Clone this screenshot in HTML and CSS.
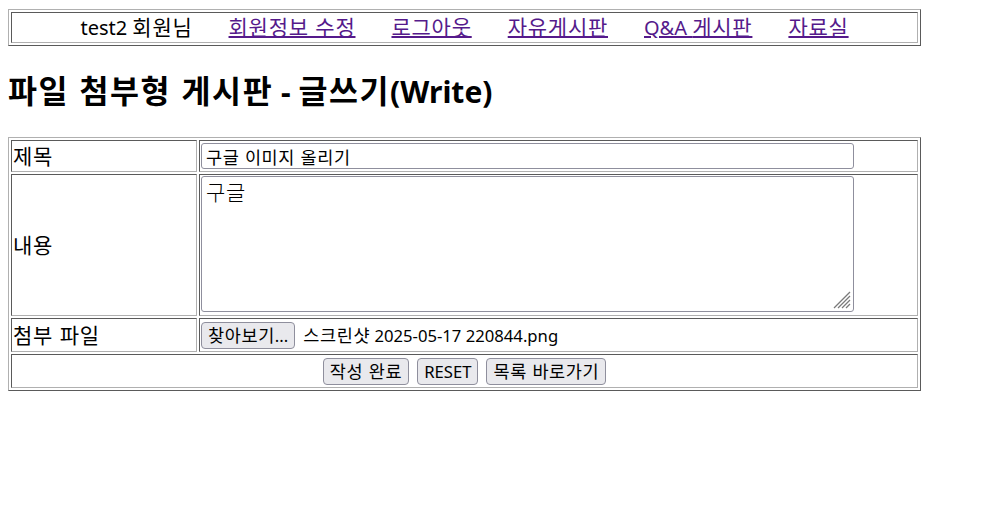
FILE: index.html
```html
<!DOCTYPE html>
<html lang="ko">
<head>
<meta charset="utf-8">
<title>파일 첨부형 게시판 - 글쓰기(Write)</title>
<link rel="stylesheet" href="styles.css">
</head>
<body>
<table class="frame">
  <tr>
    <td class="nav-cell">
      <div class="nav">
        <span>test2 <span class="ko">회원님</span></span>
        <a href="#" class="link"><span class="ko">회원정보 수정</span></a>
        <a href="#" class="link"><span class="ko">로그아웃</span></a>
        <a href="#" class="link"><span class="ko">자유게시판</span></a>
        <a href="#" class="link">Q&amp;A <span class="ko">게시판</span></a>
        <a href="#" class="link"><span class="ko">자료실</span></a>
      </div>
    </td>
  </tr>
</table>
<h2 class="title"><span class="ko">파일 첨부형 게시판</span> - <span class="ko">글쓰기</span>(Write)</h2>
<table class="frame">
  <tr>
    <td class="label"><span class="ko">제목</span></td>
    <td class="field"><input class="text-input" type="text" value="구글 이미지 올리기"></td>
  </tr>
  <tr>
    <td class="label"><span class="ko">내용</span></td>
    <td class="field">
      <div class="area">
        <textarea class="textarea">구글</textarea>
        <svg class="grip" width="18" height="18" viewBox="0 0 18 18">
          <g stroke="#7a7a7a" stroke-width="1.2" fill="none">
            <line x1="17" y1="1" x2="1" y2="17"/>
            <line x1="17" y1="5" x2="5" y2="17"/>
            <line x1="17" y1="9" x2="9" y2="17"/>
            <line x1="17" y1="13" x2="13" y2="17"/>
          </g>
        </svg>
      </div>
    </td>
  </tr>
  <tr>
    <td class="label"><span class="ko">첨부 파일</span></td>
    <td class="field">
      <div class="file">
        <button class="btn" type="button"><span class="ko">찾아보기</span>...</button>
        <span class="file-name"><span class="ko">스크린샷</span> 2025-05-17 220844.png</span>
      </div>
    </td>
  </tr>
  <tr>
    <td class="actions-cell" colspan="2">
      <div class="actions">
        <button class="btn" type="button"><span class="ko">작성 완료</span></button>
        <button class="btn" type="button">RESET</button>
        <button class="btn" type="button"><span class="ko">목록 바로가기</span></button>
      </div>
    </td>
  </tr>
</table>
</body>
</html>
```
FILE: styles.css
```css
html, body {
  background: #ffffff;
}
body {
  margin: 9px 8px 8px;
  color: #000000;
  font-family: "Noto Sans", "Noto Sans CJK KR", sans-serif;
  font-size: 20px;
  line-height: 27px;
}
.ko {
  font-family: "Noto Sans CJK KR", sans-serif;
  font-size: 1.05em;
  letter-spacing: 0.035em;
  line-height: 1;
}
.frame {
  width: 913px;
  border-collapse: separate;
  border-spacing: 2px;
  border: 1px solid;
  border-color: #b0b0b0 #5a5a5a #5a5a5a #b0b0b0;
}
.frame td {
  border: 1px solid;
  border-color: #5a5a5a #b0b0b0 #b0b0b0 #5a5a5a;
  padding: 1px;
}
.nav {
  display: flex;
  justify-content: center;
  gap: 36px;
  height: 27px;
  align-items: center;
}
.link {
  color: #551a8b;
  text-decoration: underline;
}
.title {
  margin: 25px 0;
  height: 41px;
  font-size: 30px;
  line-height: 41px;
  font-weight: bold;
}
.title .ko {
  letter-spacing: 0.05em;
}
.label {
  width: 182px;
  vertical-align: middle;
}
.field {
  vertical-align: middle;
}
.text-input {
  display: block;
  box-sizing: border-box;
  width: 653px;
  height: 26px;
  margin: 1px 0;
  padding: 0 4px;
  border: 1px solid #8f8f9d;
  border-radius: 3px;
  font-family: "Noto Sans CJK KR", sans-serif;
  font-size: 17.5px;
  letter-spacing: 0.6px;
  color: #000000;
  background: #ffffff;
}
.area {
  position: relative;
  width: 653px;
  height: 136px;
  margin-bottom: 2px;
}
.textarea {
  display: block;
  box-sizing: border-box;
  width: 653px;
  height: 136px;
  margin: 0;
  padding: 1px 4px;
  border: 1px solid #8f8f9d;
  border-radius: 3px;
  resize: none;
  font-family: "Noto Sans CJK KR", sans-serif;
  font-weight: 300;
  font-size: 21px;
  letter-spacing: 0.8px;
  line-height: 27px;
  color: #000000;
  background: #ffffff;
}
.grip {
  position: absolute;
  right: 3px;
  bottom: 3px;
}
.file {
  display: flex;
  align-items: center;
  gap: 8px;
  height: 30px;
}
.file-name {
  font-size: 16.67px;
}
.btn {
  box-sizing: border-box;
  height: 27px;
  padding: 0 6px;
  border: 1px solid #8f8f9d;
  border-radius: 4px;
  background: #e9e9ed;
  color: #000000;
  font-family: "Noto Sans", "Noto Sans CJK KR", sans-serif;
  font-size: 16.67px;
  line-height: 25px;
}
.actions-cell {
  text-align: center;
}
.actions {
  display: flex;
  justify-content: center;
  align-items: center;
  gap: 8px;
  height: 30px;
}
```
